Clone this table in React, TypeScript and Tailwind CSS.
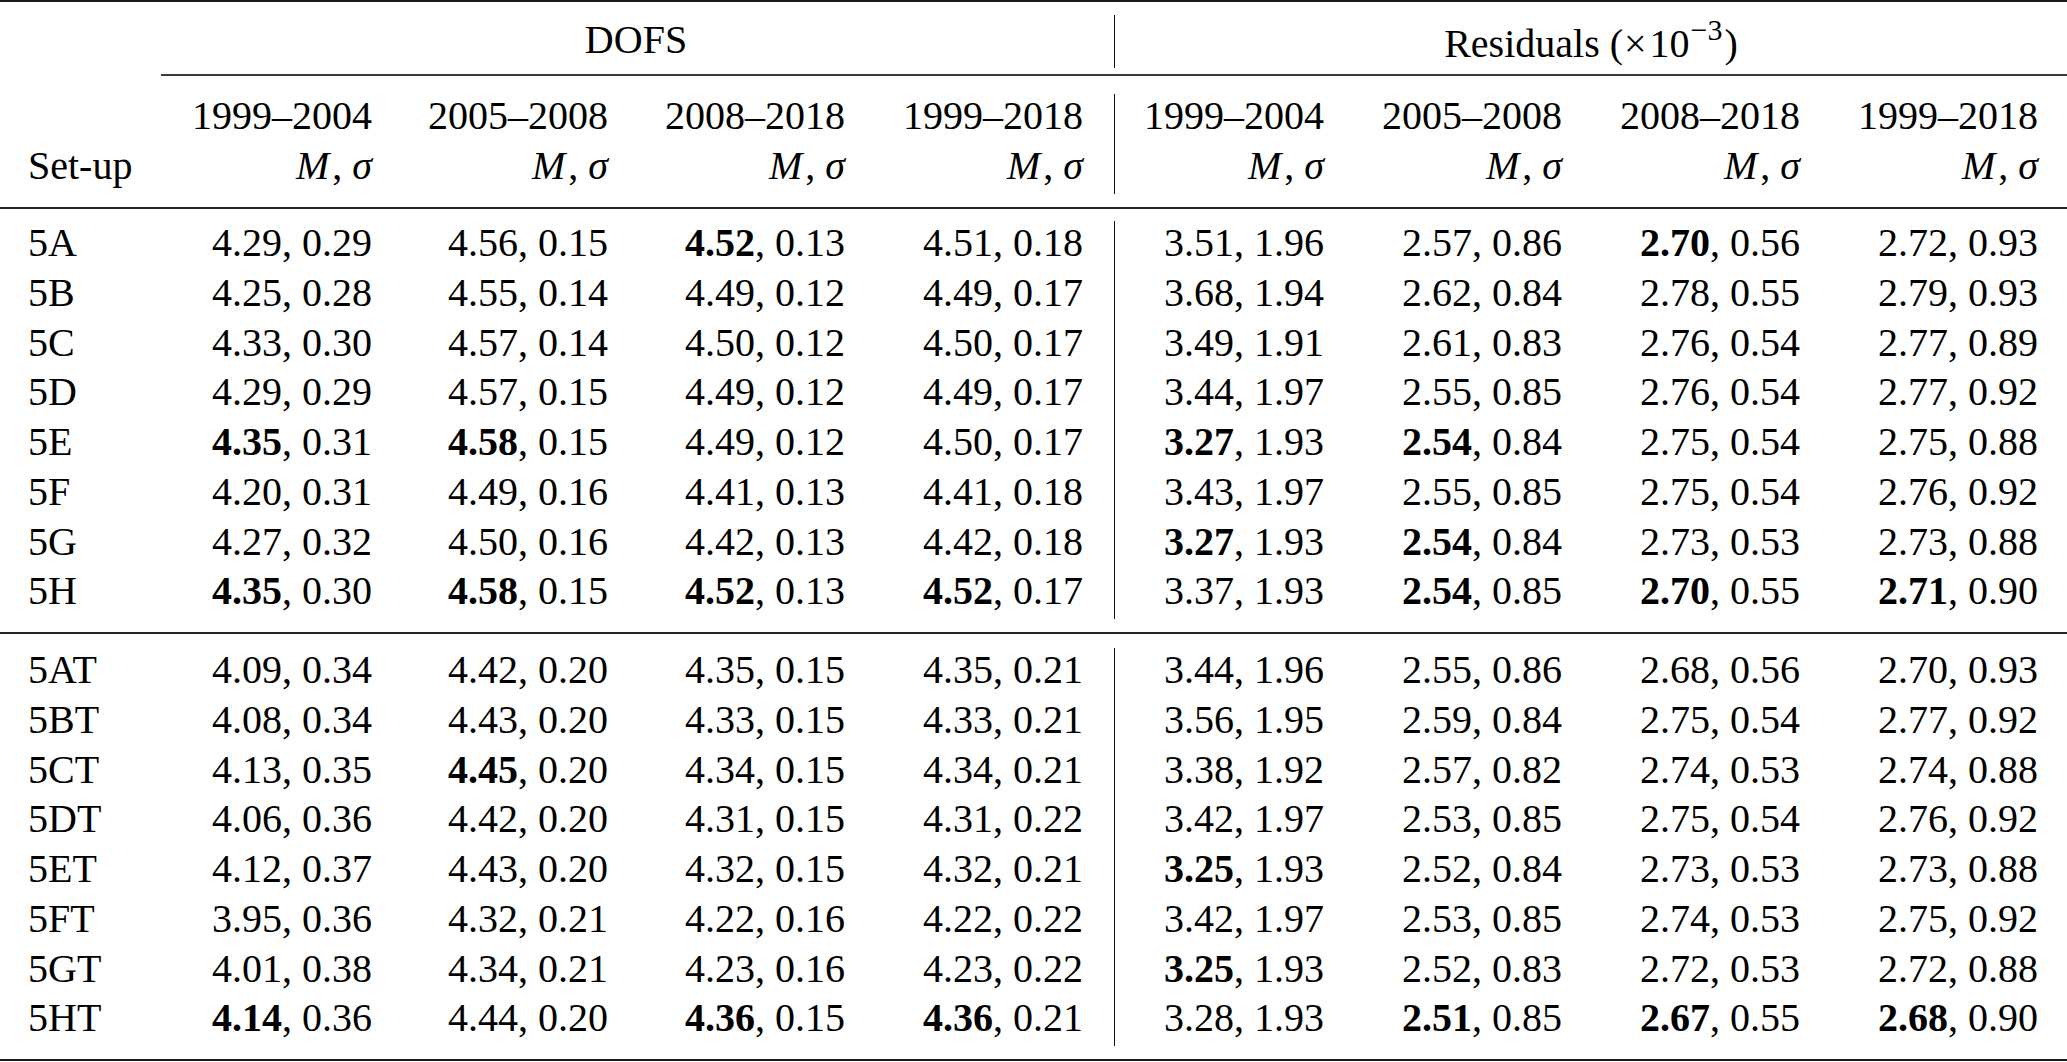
import React from "react";

type RowData = { label: string; cells: string[] };

const group1: RowData[] = [
  { label: "5A", cells: ["4.29, 0.29", "4.56, 0.15", "*4.52, 0.13", "4.51, 0.18", "3.51, 1.96", "2.57, 0.86", "*2.70, 0.56", "2.72, 0.93"] },
  { label: "5B", cells: ["4.25, 0.28", "4.55, 0.14", "4.49, 0.12", "4.49, 0.17", "3.68, 1.94", "2.62, 0.84", "2.78, 0.55", "2.79, 0.93"] },
  { label: "5C", cells: ["4.33, 0.30", "4.57, 0.14", "4.50, 0.12", "4.50, 0.17", "3.49, 1.91", "2.61, 0.83", "2.76, 0.54", "2.77, 0.89"] },
  { label: "5D", cells: ["4.29, 0.29", "4.57, 0.15", "4.49, 0.12", "4.49, 0.17", "3.44, 1.97", "2.55, 0.85", "2.76, 0.54", "2.77, 0.92"] },
  { label: "5E", cells: ["*4.35, 0.31", "*4.58, 0.15", "4.49, 0.12", "4.50, 0.17", "*3.27, 1.93", "*2.54, 0.84", "2.75, 0.54", "2.75, 0.88"] },
  { label: "5F", cells: ["4.20, 0.31", "4.49, 0.16", "4.41, 0.13", "4.41, 0.18", "3.43, 1.97", "2.55, 0.85", "2.75, 0.54", "2.76, 0.92"] },
  { label: "5G", cells: ["4.27, 0.32", "4.50, 0.16", "4.42, 0.13", "4.42, 0.18", "*3.27, 1.93", "*2.54, 0.84", "2.73, 0.53", "2.73, 0.88"] },
  { label: "5H", cells: ["*4.35, 0.30", "*4.58, 0.15", "*4.52, 0.13", "*4.52, 0.17", "3.37, 1.93", "*2.54, 0.85", "*2.70, 0.55", "*2.71, 0.90"] },
];

const group2: RowData[] = [
  { label: "5AT", cells: ["4.09, 0.34", "4.42, 0.20", "4.35, 0.15", "4.35, 0.21", "3.44, 1.96", "2.55, 0.86", "2.68, 0.56", "2.70, 0.93"] },
  { label: "5BT", cells: ["4.08, 0.34", "4.43, 0.20", "4.33, 0.15", "4.33, 0.21", "3.56, 1.95", "2.59, 0.84", "2.75, 0.54", "2.77, 0.92"] },
  { label: "5CT", cells: ["4.13, 0.35", "*4.45, 0.20", "4.34, 0.15", "4.34, 0.21", "3.38, 1.92", "2.57, 0.82", "2.74, 0.53", "2.74, 0.88"] },
  { label: "5DT", cells: ["4.06, 0.36", "4.42, 0.20", "4.31, 0.15", "4.31, 0.22", "3.42, 1.97", "2.53, 0.85", "2.75, 0.54", "2.76, 0.92"] },
  { label: "5ET", cells: ["4.12, 0.37", "4.43, 0.20", "4.32, 0.15", "4.32, 0.21", "*3.25, 1.93", "2.52, 0.84", "2.73, 0.53", "2.73, 0.88"] },
  { label: "5FT", cells: ["3.95, 0.36", "4.32, 0.21", "4.22, 0.16", "4.22, 0.22", "3.42, 1.97", "2.53, 0.85", "2.74, 0.53", "2.75, 0.92"] },
  { label: "5GT", cells: ["4.01, 0.38", "4.34, 0.21", "4.23, 0.16", "4.23, 0.22", "*3.25, 1.93", "2.52, 0.83", "2.72, 0.53", "2.72, 0.88"] },
  { label: "5HT", cells: ["*4.14, 0.36", "4.44, 0.20", "*4.36, 0.15", "*4.36, 0.21", "3.28, 1.93", "*2.51, 0.85", "*2.67, 0.55", "*2.68, 0.90"] },
];

const periods = ["1999–2004", "2005–2008", "2008–2018", "1999–2018", "1999–2004", "2005–2008", "2008–2018", "1999–2018"];

function Value({ text }: { text: string }) {
  if (text.startsWith("*")) {
    const [a, b] = text.slice(1).split(", ");
    return (
      <>
        <b className="font-bold">{a}</b>, {b}
      </>
    );
  }
  return <>{text}</>;
}

function MSigma() {
  return (
    <>
      <i className="italic">M</i>
      <span className="ml-[3px]">,</span> <i className="italic">σ</i>
    </>
  );
}

// Cell layout shared by every row: label | 4 DOFS columns | 4 residual columns | trailing pad
function Cells({ label, items }: { label: React.ReactNode; items: React.ReactNode[] }) {
  return (
    <>
      <div className="w-[134px] shrink-0 pl-[28px] text-left">{label}</div>
      <div className="w-[238px] shrink-0 text-right">{items[0]}</div>
      <div className="w-[236px] shrink-0 text-right">{items[1]}</div>
      <div className="w-[237px] shrink-0 text-right">{items[2]}</div>
      <div className="w-[269px] shrink-0 pr-[31px] text-right">{items[3]}</div>
      <div className="w-[210px] shrink-0 border-l border-[#111] text-right">{items[4]}</div>
      <div className="w-[238px] shrink-0 text-right">{items[5]}</div>
      <div className="w-[238px] shrink-0 text-right">{items[6]}</div>
      <div className="w-[238px] shrink-0 text-right">{items[7]}</div>
      <div className="w-[29px] shrink-0" />
    </>
  );
}

function BodyGroup({ rows }: { rows: RowData[] }) {
  return (
    <div className="flex flex-col">
      {rows.map((r) => (
        <div key={r.label} className="flex h-[49.75px] leading-[44px] whitespace-nowrap">
          <Cells label={r.label} items={r.cells.map((c, i) => <Value key={i} text={c} />)} />
        </div>
      ))}
    </div>
  );
}

export default function App() {
  return (
    <div className="w-[2067px] h-[1062px] overflow-hidden bg-white text-black font-[family-name:Liberation_Serif,Times_New_Roman,serif] text-[40px]">
      {/* top rule */}
      <div className="h-[2px] bg-[#1a1a1a]" />

      {/* spanning header */}
      <div className="mt-[13px] flex h-[53px] leading-[49px] whitespace-nowrap">
        <div className="w-[158px] shrink-0" />
        <div className="w-[956px] shrink-0 text-center">DOFS</div>
        <div className="flex-1 border-l border-[#111] text-center">
          Residuals (<span className="mr-[3px] ml-[1px]">×</span>10
          <span className="ml-[1px] text-[30px] leading-none align-[17px]">−3</span>
          <span className="ml-[2px]">)</span>
        </div>
      </div>

      {/* cmidrule */}
      <div className="mt-[6px] ml-[161px] h-[2px] bg-[#3a3a3a]" />

      {/* column headers */}
      <div className="mt-[18px] flex flex-col">
        <div className="flex h-[49.75px] leading-[44px] whitespace-nowrap">
          <Cells label="" items={periods} />
        </div>
        <div className="flex h-[49.75px] leading-[44px] whitespace-nowrap">
          <Cells label="Set-up" items={periods.map((_, i) => <MSigma key={i} />)} />
        </div>
      </div>

      {/* midrule */}
      <div className="mt-[13px] h-[2px] bg-[#262626]" />

      <div className="mt-[12.5px]">
        <BodyGroup rows={group1} />
      </div>

      {/* midrule */}
      <div className="mt-[13px] h-[2px] bg-[#262626]" />

      <div className="mt-[14px]">
        <BodyGroup rows={group2} />
      </div>

      {/* bottom rule */}
      <div className="mt-[13px] h-[2px] bg-[#1a1a1a]" />
    </div>
  );
}
